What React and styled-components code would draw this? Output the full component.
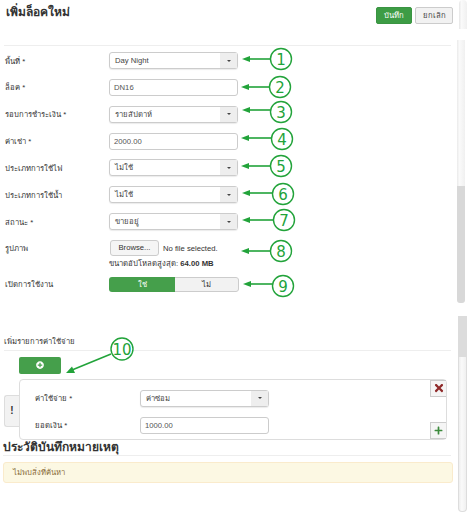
import React from "react";
import styled, { createGlobalStyle } from "styled-components";
import { FaPlusCircle, FaPlus, FaTimes } from "react-icons/fa";

const GlobalStyle = createGlobalStyle`
    html, body {
        margin: 0;
        padding: 0;
        background: #fff;
    }
    body {
        font-family: "Liberation Sans", "Noto Sans", sans-serif;
        font-size: 7.7px;
        color: #333;
    }
`;

// numbered callouts drawn on top of the screenshot
const callouts = [
    { n: 1, cx: 281, cy: 59, y: 59, tip: 242 },
    { n: 2, cx: 280, cy: 87, y: 87, tip: 241 },
    { n: 3, cx: 281, cy: 112, y: 110, tip: 242 },
    { n: 4, cx: 282, cy: 139, y: 138, tip: 241 },
    { n: 5, cx: 281, cy: 166, y: 166, tip: 241 },
    { n: 6, cx: 283, cy: 194, y: 193, tip: 242 },
    { n: 7, cx: 284, cy: 220, y: 220, tip: 242 },
    { n: 8, cx: 281, cy: 251, y: 251, tip: 241 },
    { n: 9, cx: 283, cy: 286, y: 284, tip: 243 },
];

function Annotations() {
    return (
        <Overlay viewBox="0 0 470 514" width="470" height="514">
            {callouts.map((c) => (
                <g key={c.n}>
                    <line x1={c.cx - 11} y1={c.y} x2={c.tip + 6} y2={c.y} stroke="#22a33a" strokeWidth="1.6" />
                    <polygon points={`${c.tip},${c.y} ${c.tip + 8},${c.y - 3} ${c.tip + 8},${c.y + 3}`} fill="#22a33a" />
                    <circle cx={c.cx} cy={c.cy} r="10.5" fill="#fff" stroke="#22a33a" strokeWidth="1.4" />
                    <CalloutText x={c.cx} y={c.cy + 5.5} textAnchor="middle">{c.n}</CalloutText>
                </g>
            ))}
            <line x1="111" y1="354" x2="72" y2="370" stroke="#22a33a" strokeWidth="1.6" />
            <polygon points="66,373 72,366.5 75,373" fill="#22a33a" />
            <circle cx="122" cy="349" r="11" fill="#fff" stroke="#22a33a" strokeWidth="1.4" />
            <CalloutText x="122" y="354.5" textAnchor="middle">10</CalloutText>
        </Overlay>
    );
}

function SelectBox({ value }) {
    return (
        <Select>
            <SelectValue>{value}</SelectValue>
            <SelectArrow>
                <Caret />
            </SelectArrow>
        </Select>
    );
}

export default function App() {
    return (
        <Page>
            <GlobalStyle />
            <Main>
                <Header>
                    <Title>เพิ่มล็อคใหม่</Title>
                    <HeaderButtons>
                        <SaveButton>บันทึก</SaveButton>
                        <CancelButton>ยกเลิก</CancelButton>
                    </HeaderButtons>
                </Header>

                <Form>
                    <FormRow>
                        <Label>พื้นที่ *</Label>
                        <SelectBox value="Day Night" />
                    </FormRow>
                    <FormRow>
                        <Label>ล็อค *</Label>
                        <Input>DN16</Input>
                    </FormRow>
                    <FormRow>
                        <Label>รอบการชำระเงิน *</Label>
                        <SelectBox value="รายสัปดาห์" />
                    </FormRow>
                    <FormRow>
                        <Label>ค่าเช่า *</Label>
                        <Input>2000.00</Input>
                    </FormRow>
                    <FormRow>
                        <Label>ประเภทการใช้ไฟ</Label>
                        <SelectBox value="ไม่ใช้" />
                    </FormRow>
                    <FormRow>
                        <Label>ประเภทการใช้น้ำ</Label>
                        <SelectBox value="ไม่ใช้" />
                    </FormRow>
                    <FormRow>
                        <Label>สถานะ *</Label>
                        <SelectBox value="ขายอยู่" />
                    </FormRow>
                    <FormRow>
                        <Label>รูปภาพ</Label>
                        <FileCell>
                            <BrowseButton>Browse...</BrowseButton>
                            <span>No file selected.</span>
                        </FileCell>
                    </FormRow>
                    <UploadHint>
                        ขนาดอัปโหลดสูงสุด: <b>64.00 MB</b>
                    </UploadHint>
                    <ToggleRow>
                        <Label>เปิดการใช้งาน</Label>
                        <Toggle>
                            <ToggleOn>ใช่</ToggleOn>
                            <ToggleOff>ไม่</ToggleOff>
                        </Toggle>
                    </ToggleRow>
                </Form>

                <ExpenseSection>
                    <SectionLabel>เพิ่มรายการค่าใช้จ่าย</SectionLabel>
                    <AddButton>
                        <FaPlusCircle size={8} color="#fff" />
                    </AddButton>
                    <ExpenseCard>
                        <NoticeTab>!</NoticeTab>
                        <ExpenseFields>
                            <ExpenseRow>
                                <ExpenseLabel>ค่าใช้จ่าย *</ExpenseLabel>
                                <SelectBox value="ค่าซ่อม" />
                            </ExpenseRow>
                            <ExpenseRow>
                                <ExpenseLabel>ยอดเงิน *</ExpenseLabel>
                                <Input>1000.00</Input>
                            </ExpenseRow>
                        </ExpenseFields>
                        <CardActions>
                            <IconButton>
                                <FaTimes size={12} color="#8f2a2a" />
                            </IconButton>
                            <IconButton>
                                <FaPlus size={9} color="#3c8a3c" />
                            </IconButton>
                        </CardActions>
                    </ExpenseCard>
                </ExpenseSection>

                <HistoryHeading>ประวัติบันทึกหมายเหตุ</HistoryHeading>
                <Alert>ไม่พบสิ่งที่ค้นหา</Alert>
            </Main>

            <ScrollColumn>
                <ScrollTop />
                <ScrollUpper />
                <ScrollThumb />
                <ScrollLowerThumb />
                <ScrollLower />
            </ScrollColumn>

            <Annotations />
        </Page>
    );
}

const Page = styled.div`
    position: relative;
    width: 470px;
    height: 514px;
    overflow: hidden;
    display: flex;
    background: #fff;
`;

const Main = styled.div`
    width: 458px;
    flex: none;
    padding-left: 4px;
    box-sizing: border-box;
`;

const Header = styled.div`
    width: 447px;
    height: 46px;
    box-sizing: border-box;
    border-bottom: 1px solid #eee;
    display: flex;
    justify-content: space-between;
    align-items: flex-start;
`;

const Title = styled.h1`
    margin: 3px 0 0 2px;
    font-size: 12px;
    line-height: 18px;
    font-weight: 700;
    color: #333;
`;

const HeaderButtons = styled.div`
    display: flex;
    gap: 3px;
    margin: 7px -2px 0 0;
`;

const SaveButton = styled.div`
    width: 36px;
    height: 17px;
    line-height: 15px;
    text-align: center;
    box-sizing: border-box;
    background: #3d9c45;
    border: 1px solid #3a9442;
    border-radius: 2px;
    color: #fff;
`;

const CancelButton = styled(SaveButton)`
    width: 38px;
    background: #f2f2f2;
    border-color: #ccc;
    color: #444;
`;

const Form = styled.div`
    padding-top: 6px;
`;

const FormRow = styled.div`
    display: grid;
    grid-template-columns: 105px 129px;
    align-items: center;
    height: 17px;
    margin-bottom: 9.85px;
`;

const Label = styled.label`
    padding-left: 1px;
    white-space: nowrap;
`;

const Select = styled.div`
    height: 17px;
    box-sizing: border-box;
    border: 1px solid #ccc;
    border-radius: 3px;
    background: #fff;
    display: flex;
    box-shadow: 0 1px 1px rgba(0, 0, 0, 0.08);
`;

const SelectValue = styled.div`
    flex: 1;
    padding-left: 5px;
    line-height: 15px;
    color: #444;
`;

const SelectArrow = styled.div`
    width: 17px;
    background: #eee;
    display: flex;
    align-items: center;
    justify-content: center;
`;

const Caret = styled.span`
    width: 0;
    height: 0;
    border-left: 2.5px solid transparent;
    border-right: 2.5px solid transparent;
    border-top: 2.5px solid #444;
`;

const Input = styled.div`
    height: 17px;
    box-sizing: border-box;
    border: 1px solid #ccc;
    border-radius: 3px;
    background: #fff;
    padding-left: 4px;
    line-height: 15px;
    color: #555;
`;

const FileCell = styled.div`
    display: flex;
    align-items: center;
    gap: 4px;
    padding-left: 1px;
    white-space: nowrap;
`;

const BrowseButton = styled.div`
    width: 49px;
    height: 16px;
    line-height: 14px;
    text-align: center;
    box-sizing: border-box;
    background: #f5f5f5;
    border: 1px solid #ccc;
    border-radius: 3px;
`;

const UploadHint = styled.div`
    margin: -9px 0 0 105px;
    height: 12px;
    line-height: 12px;
`;

const ToggleRow = styled(FormRow)`
    height: 15px;
    margin: 7px 0 0;
`;

const Toggle = styled.div`
    width: 130px;
    height: 15px;
    display: flex;
    border-radius: 3px;
    overflow: hidden;
`;

const ToggleOn = styled.div`
    width: 66px;
    background: #459f4b;
    color: #fff;
    text-align: center;
    line-height: 15px;
`;

const ToggleOff = styled.div`
    flex: 1;
    box-sizing: border-box;
    background: #f2f2f2;
    border: 1px solid #ccc;
    border-left: none;
    border-radius: 0 3px 3px 0;
    text-align: center;
    line-height: 13px;
`;

const ExpenseSection = styled.div`
    margin-top: 42px;
`;

const SectionLabel = styled.div`
    width: 447px;
    height: 17px;
    box-sizing: border-box;
    border-bottom: 1px solid #eee;
    line-height: 16px;
`;

const AddButton = styled.div`
    width: 42px;
    height: 17px;
    margin: 6px 0 5px 15px;
    background: #459f4b;
    border-radius: 2px;
    display: flex;
    align-items: center;
    justify-content: center;
`;

const ExpenseCard = styled.div`
    position: relative;
    width: 428px;
    height: 61px;
    margin-left: 15px;
    box-sizing: border-box;
    border: 1px solid #ddd;
    border-radius: 4px;
    background: #fff;
    display: flex;
    justify-content: space-between;
`;

// sits behind the left edge of the card
const NoticeTab = styled.div`
    position: absolute;
    left: -16px;
    top: 15px;
    width: 15px;
    height: 32px;
    box-sizing: border-box;
    border: 1px solid #ddd;
    border-right: none;
    border-radius: 3px 0 0 3px;
    background: #f2f2f2;
    font-weight: 700;
    font-size: 10px;
    line-height: 30px;
    text-align: center;
`;

const ExpenseFields = styled.div`
    padding: 10px 0 0 15px;
`;

const ExpenseRow = styled(FormRow)`
    margin-bottom: 10px;
`;

const ExpenseLabel = styled(Label)`
    padding-left: 0;
`;

const CardActions = styled.div`
    display: flex;
    flex-direction: column;
    justify-content: space-between;
`;

const IconButton = styled.div`
    width: 16px;
    height: 17px;
    box-sizing: border-box;
    background: #f5f5f5;
    border-left: 1px solid #ccc;
    border-bottom: 1px solid #ccc;
    border-top: 1px solid #ccc;
    display: flex;
    align-items: center;
    justify-content: center;
`;

const HistoryHeading = styled.h2`
    width: 448px;
    height: 16px;
    box-sizing: border-box;
    margin: 0 0 6px -1px;
    border-bottom: 1px solid #eee;
    font-size: 12px;
    line-height: 14px;
    font-weight: 700;
    color: #333;
    white-space: nowrap;
`;

const Alert = styled.div`
    width: 450px;
    height: 21px;
    margin-left: -1px;
    box-sizing: border-box;
    padding-left: 9px;
    background: #fcf8e3;
    border: 1px solid #faebcc;
    border-radius: 3px;
    color: #8a6d3b;
    line-height: 19px;
`;

const ScrollColumn = styled.div`
    width: 12px;
    display: flex;
    flex-direction: column;
`;

const ScrollTop = styled.div`
    width: 8px;
    height: 29px;
    margin: 0 0 11px 1px;
    border-radius: 4px 4px 0 0;
    background: linear-gradient(to right, #e6e6e6, #fafafa 30%, #f0f0f0);
`;

const ScrollUpper = styled.div`
    width: 8px;
    height: 146px;
    margin-left: -1px;
    background: linear-gradient(to right, #eaeaea, #fafafa 30%, #f0f0f0);
`;

const ScrollThumb = styled.div`
    width: 8px;
    height: 117px;
    margin: 0 0 13px -1px;
    border-radius: 0 0 3px 3px;
    background: #d8d8d8;
`;

const ScrollLowerThumb = styled.div`
    width: 9px;
    height: 41px;
    background: #dcdcdc;
`;

const ScrollLower = styled.div`
    width: 9px;
    height: 155px;
    box-sizing: border-box;
    border: 1px solid #ddd;
    border-top: none;
    border-radius: 0 0 4px 4px;
    background: linear-gradient(to right, #eee, #fafafa 40%, #f0f0f0);
`;

const Overlay = styled.svg`
    position: absolute;
    left: 0;
    top: 0;
    pointer-events: none;
`;

const CalloutText = styled.text`
    font-family: "DejaVu Sans", sans-serif;
    font-size: 15px;
    fill: #22a33a;
`;
